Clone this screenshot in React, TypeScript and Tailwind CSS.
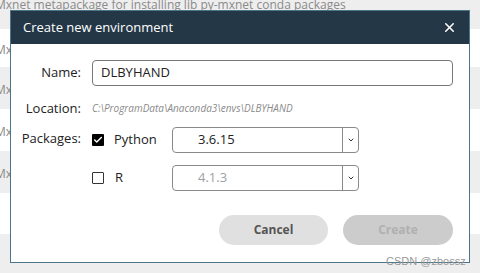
import { Check, ChevronDown, X } from "lucide-react";

const ROWS = [
  { h: "h-[29px]", bg: "bg-[#eeeeee]", text: "Mxnet metapackage for installing lib py-mxnet conda packages", top: true },
  { h: "h-[38px]", bg: "bg-white", text: "Mx" },
  { h: "h-[42px]", bg: "bg-[#eeeeee]", text: "Mx" },
  { h: "h-[42px]", bg: "bg-white", text: "Mx" },
  { h: "h-[42px]", bg: "bg-[#eeeeee]", text: "Mx" },
  { h: "h-[41px]", bg: "bg-white", text: "" },
  { h: "h-[39px]", bg: "bg-[#eeeeee]", text: "" },
];

function Select({ value, disabled }: { value: string; disabled?: boolean }) {
  return (
    <div className="flex h-[26px] w-[187px] items-center rounded-[4px] border border-[#8a8a8a] bg-white">
      <span className={`flex-1 pl-[25px] text-[13px] ${disabled ? "text-[#a0a0a0]" : "text-[#222]"}`}>{value}</span>
      <span className="flex h-full w-[16px] items-center justify-center border-l border-[#8a8a8a]">
        <ChevronDown className="h-[8px] w-[8px] text-[#333]" strokeWidth={3} />
      </span>
    </div>
  );
}

export default function App() {
  return (
    <div className="relative h-[273px] w-[480px] overflow-hidden bg-white font-['Open_Sans',sans-serif]">
      {/* background list behind the modal */}
      <div className="flex flex-col">
        {ROWS.map((row, i) => (
          <div key={i} className={`${row.h} ${row.bg} flex ${row.top ? "items-start" : "items-center pt-[4px]"}`}>
            <span className={`-ml-[5px] whitespace-nowrap text-[12px] text-[#8a8a8a] ${row.top ? "-mt-[4px]" : ""}`}>{row.text}</span>
          </div>
        ))}
      </div>

      {/* dialog */}
      <div className="absolute left-[10px] top-[10px] flex h-[253px] w-[460px] flex-col border border-[#4d7589] bg-white">
        <div className="flex h-[33px] items-center justify-between bg-[#243746] pl-[12px] pr-[12px]">
          <span className="text-[13px] text-white">Create new environment</span>
          <X className="h-[15px] w-[15px] text-white" strokeWidth={2.5} />
        </div>

        <div className="grid grid-cols-[70px_1fr] items-center gap-x-[11px] pr-[16px] pt-[16px]">
          <span className="text-right text-[13px] text-[#222]">Name:</span>
          <div className="flex h-[26px] items-center rounded-[4px] border border-[#777] pl-[8px] text-[13px] text-[#222]">
            DLBYHAND
          </div>

          <span className="mt-[13px] text-right text-[13px] text-[#222]">Location:</span>
          <span className="mt-[13px] text-[10px] italic text-[#8a8a8a]">C:\ProgramData\Anaconda3\envs\DLBYHAND</span>

          <span className="mt-[8px] self-start pt-[2px] text-right text-[13px] text-[#222]">Packages:</span>
          <div className="mt-[8px] flex flex-col gap-[12px]">
            <div className="flex items-center">
              <span className="flex h-[12px] w-[12px] items-center justify-center rounded-[1px] bg-black">
                <Check className="h-[10px] w-[10px] text-white" strokeWidth={3.5} />
              </span>
              <span className="ml-[10px] w-[58px] text-[13px] text-[#222]">Python</span>
              <Select value="3.6.15" />
            </div>
            <div className="flex items-center">
              <span className="h-[12px] w-[12px] rounded-[1px] border border-[#333] bg-white" />
              <span className="ml-[11px] w-[57px] text-[13px] text-[#222]">R</span>
              <Select value="4.1.3" disabled />
            </div>
          </div>
        </div>

        <div className="mt-auto flex justify-end gap-[15px] pb-[17px] pr-[16px]">
          <button className="h-[30px] w-[109px] rounded-full bg-[#e0e0e0] text-[12px] font-bold text-[#555]">Cancel</button>
          <button className="h-[30px] w-[110px] rounded-full bg-[#cccccc] text-[12px] font-bold text-[#b0b0b0]">Create</button>
        </div>
      </div>

      {/* watermark */}
      <span className="absolute left-[386px] top-[253px] font-['Liberation_Sans',sans-serif] text-[11px] text-[#999]">CSDN @zbossz</span>
    </div>
  );
}
